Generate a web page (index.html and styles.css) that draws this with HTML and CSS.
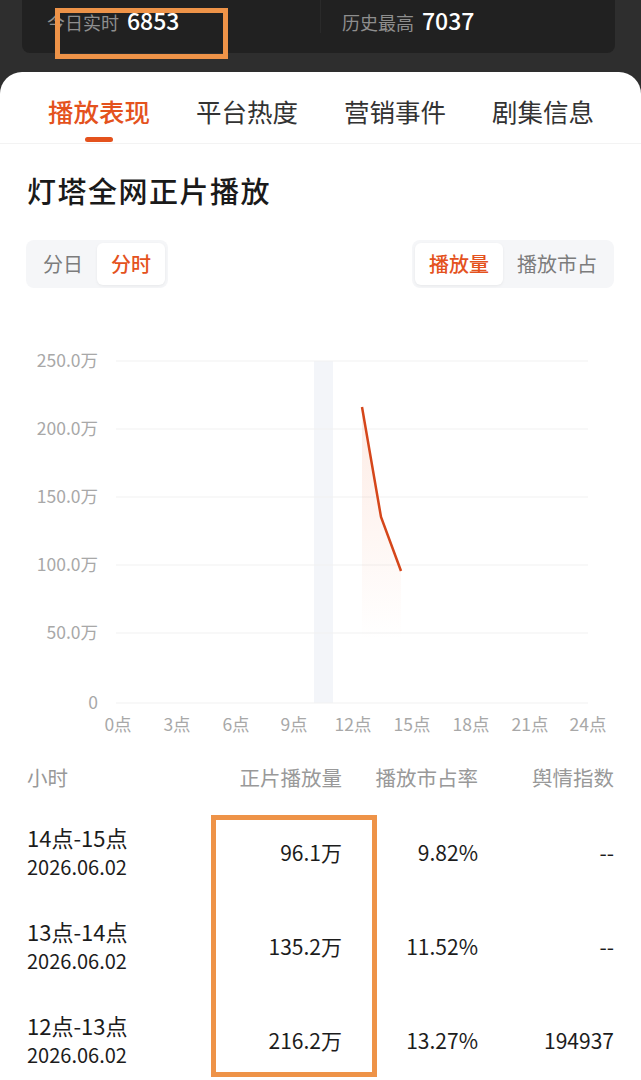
FILE: index.html
```html
<!DOCTYPE html>
<html lang="zh-CN">
<head>
    <meta charset="UTF-8">
    <meta name="viewport" content="width=device-width, initial-scale=1.0">
    <title>灯塔全网正片播放</title>
    <link rel="stylesheet" href="styles.css">
</head>
<body>
    <div class="stats">
        <div class="stat"><span class="stat-label">今日实时</span><span class="stat-value">6853</span></div>
        <div class="stat"><span class="stat-label">历史最高</span><span class="stat-value">7037</span></div>
    </div>
    <div class="mark mark-top"></div>

    <div class="panel">
        <div class="tabs">
            <div class="tab active">播放表现</div>
            <div class="tab">平台热度</div>
            <div class="tab">营销事件</div>
            <div class="tab">剧集信息</div>
        </div>

        <h2 class="title">灯塔全网正片播放</h2>

        <div class="switches">
            <div class="seg"><span>分日</span><span class="on">分时</span></div>
            <div class="seg"><span class="on">播放量</span><span>播放市占</span></div>
        </div>

        <svg class="chart" width="641" height="440" viewBox="0 300 641 440">
            <defs>
                <linearGradient id="fade" x1="0" y1="0" x2="0" y2="1">
                    <stop offset="0" stop-color="#f2855a" stop-opacity="0.16"/>
                    <stop offset="1" stop-color="#f2855a" stop-opacity="0"/>
                </linearGradient>
            </defs>
            <!-- barra del periodo actual -->
            <rect x="314" y="361" width="19" height="342" fill="#f3f5f9"/>
            <g stroke="#f2f2f2" stroke-width="1.2">
                <line x1="116" y1="361" x2="588" y2="361"/>
                <line x1="116" y1="429" x2="588" y2="429"/>
                <line x1="116" y1="497" x2="588" y2="497"/>
                <line x1="116" y1="565" x2="588" y2="565"/>
                <line x1="116" y1="633" x2="588" y2="633"/>
                <line x1="116" y1="703" x2="588" y2="703"/>
            </g>
            <g class="ylabels" text-anchor="end">
                <text x="98" y="367">250.0万</text>
                <text x="98" y="435">200.0万</text>
                <text x="98" y="503">150.0万</text>
                <text x="98" y="571">100.0万</text>
                <text x="98" y="639">50.0万</text>
                <text x="98" y="709">0</text>
            </g>
            <g class="xlabels" text-anchor="middle">
                <text x="118" y="731">0点</text>
                <text x="177" y="731">3点</text>
                <text x="236" y="731">6点</text>
                <text x="294" y="731">9点</text>
                <text x="353" y="731">12点</text>
                <text x="412" y="731">15点</text>
                <text x="471" y="731">18点</text>
                <text x="530" y="731">21点</text>
                <text x="588" y="731">24点</text>
            </g>
            <polygon points="362,407 381,517 401,571 401,640 362,640" fill="url(#fade)"/>
            <polyline points="362,407 381,517 401,571" fill="none" stroke="#d5461a" stroke-width="2.5"/>
        </svg>

        <div class="table">
            <div class="row head">
                <div>小时</div>
                <div class="num">正片播放量</div>
                <div class="num">播放市占率</div>
                <div class="num">舆情指数</div>
            </div>
            <div class="row">
                <div class="hour">14点-15点<span>2026.06.02</span></div>
                <div class="num">96.1万</div>
                <div class="num">9.82%</div>
                <div class="num">--</div>
            </div>
            <div class="row">
                <div class="hour">13点-14点<span>2026.06.02</span></div>
                <div class="num">135.2万</div>
                <div class="num">11.52%</div>
                <div class="num">--</div>
            </div>
            <div class="row">
                <div class="hour">12点-13点<span>2026.06.02</span></div>
                <div class="num">216.2万</div>
                <div class="num">13.27%</div>
                <div class="num">194937</div>
            </div>
        </div>
    </div>
    <div class="mark mark-table"></div>
</body>
</html>
```

FILE: styles.css
```css
body {
    margin: 0;
    height: 1080px;
    overflow: hidden;
    background: #2e2e2e;
    font-family: "Noto Sans CJK SC", "Noto Sans", sans-serif;
    position: relative;
}
.stats {
    display: flex;
    margin: 0 26px 0 22px;
    height: 53px;
    background: #212121;
    border-radius: 0 0 8px 8px;
}
.stat {
    flex: 1;
    display: flex;
    align-items: baseline;
    padding: 3px 0 0 25px;
    height: 30px;
}
.stat + .stat {
    border-left: 1px solid #2a2a2a;
    padding-left: 21px;
}
.stat-label {
    font-size: 18px;
    color: #8e8e8e;
    margin-right: 8px;
}
.stat-value {
    font-size: 23px;
    color: #fff;
    font-weight: 500;
}
.mark {
    position: absolute;
    box-sizing: border-box;
    border: 5px solid #ee9348;
}
.mark-top {
    left: 55px;
    top: 8px;
    width: 173px;
    height: 51px;
}
.mark-table {
    left: 211px;
    top: 815px;
    width: 166px;
    height: 262px;
}
.panel {
    margin-top: 19px;
    background: #fff;
    border-radius: 22px 22px 0 0;
    height: 1020px;
}
.tabs {
    display: flex;
    gap: 46px;
    padding-left: 48px;
    height: 71px;
    border-bottom: 1px solid #f3f3f3;
}
.tab {
    display: flex;
    flex-direction: column;
    align-items: center;
    padding-top: 24px;
    font-size: 25.5px;
    line-height: 30px;
    color: #333;
}
.tab.active {
    color: #e4521d;
    font-weight: 500;
}
.tab.active::after {
    content: "";
    width: 28px;
    height: 5px;
    margin-top: 11px;
    border-radius: 3px;
    background: #e4521d;
}
.title {
    margin: 26px 0 0 27px;
    font-size: 29px;
    line-height: 40px;
    font-weight: 500;
    letter-spacing: 1.5px;
    color: #1a1a1a;
}
.switches {
    display: flex;
    justify-content: space-between;
    margin: 30px 27px 0 26px;
}
.seg {
    display: flex;
    padding: 3px;
    background: #f5f6f8;
    border-radius: 8px;
}
.seg span {
    padding: 0 14px;
    height: 42px;
    line-height: 42px;
    font-size: 20px;
    color: #7c7c7c;
    border-radius: 6px;
}
.seg span.on {
    background: #fff;
    color: #e4521d;
    font-weight: 500;
    box-shadow: 0 1px 3px rgba(0,0,0,0.06);
}
.chart {
    display: block;
    margin-top: 12px;
}
.chart text {
    font-family: "Noto Sans CJK SC", sans-serif;
    font-size: 17.5px;
    fill: #a8a8a8;
}
.table {
    padding: 0 27px;
}
.row {
    display: grid;
    grid-template-columns: 205px 110px 136px 136px;
    align-items: center;
    height: 94px;
    font-size: 21px;
    color: #1c1c1c;
}
.row.head {
    height: 65px;
    align-items: start;
    padding-top: 26px;
    box-sizing: border-box;
    line-height: 22px;
    font-size: 20.5px;
    color: #999;
}
.num {
    text-align: right;
}
.hour {
    font-size: 22px;
    line-height: 30px;
}
.hour span {
    display: block;
    font-size: 20px;
}
```
